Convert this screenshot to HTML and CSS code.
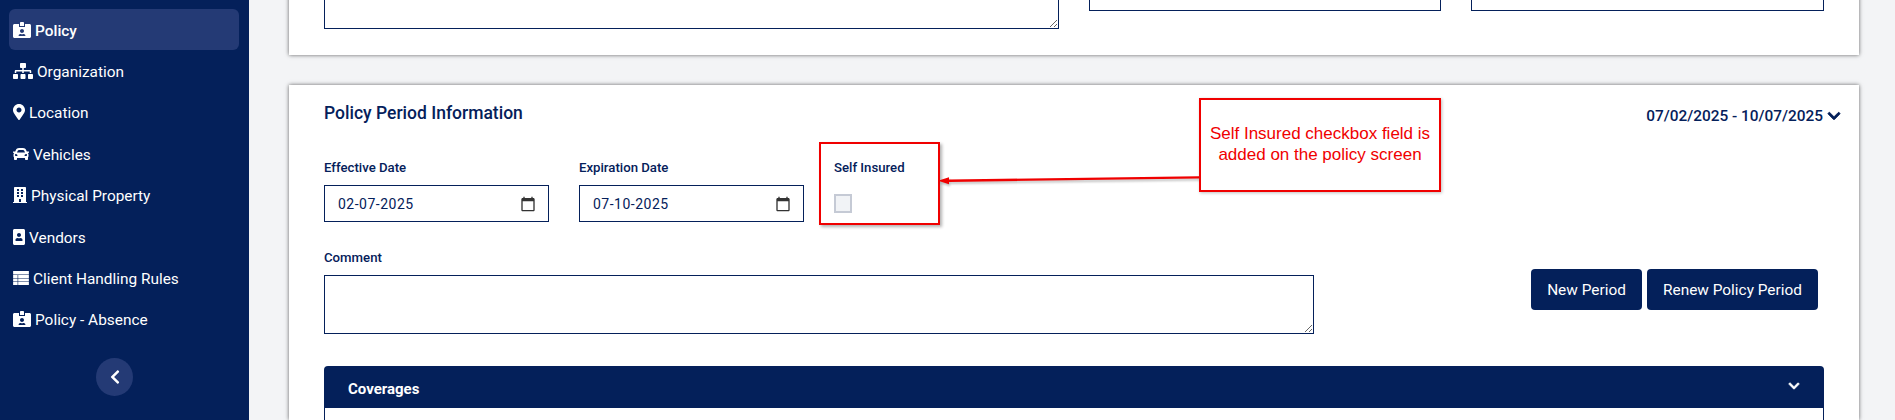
FILE: index.html
```html
<!DOCTYPE html>
<html lang="en">

<head>
  <meta charset="UTF-8">
  <meta name="viewport" content="width=device-width, initial-scale=1.0">
  <title>Policy</title>
  <link rel="stylesheet" href="styles.css">
</head>

<body>
  <svg class="icon-defs" xmlns="http://www.w3.org/2000/svg">
    <symbol id="i-idcard" viewBox="0 0 576 512"><path d="M528 64H384v96H192V64H48C21.5 64 0 85.5 0 112v352c0 26.5 21.5 48 48 48h480c26.5 0 48-21.5 48-48V112c0-26.5-21.5-48-48-48zM288 224c35.3 0 64 28.7 64 64s-28.7 64-64 64-64-28.7-64-64 28.7-64 64-64zm93.3 224H194.7c-10.4 0-18.8-10-15.6-19.8 8.3-25.6 32.4-44.2 60.9-44.2h8.2c12.3 5.1 25.7 8 39.8 8s27.6-2.9 39.8-8h8.2c28.4 0 52.5 18.5 60.9 44.2 3.2 9.8-5.2 19.8-15.6 19.8zM352 32c0-17.7-14.3-32-32-32h-64c-17.7 0-32 14.3-32 32v96h128V32z"/></symbol>
    <symbol id="i-sitemap" viewBox="0 0 640 512"><path d="M128 352H32c-17.67 0-32 14.33-32 32v96c0 17.67 14.33 32 32 32h96c17.67 0 32-14.33 32-32v-96c0-17.67-14.33-32-32-32zm-24-80h192v48h48v-48h192v48h48v-57.59c0-21.17-17.23-38.41-38.41-38.41H344v-64h40c17.67 0 32-14.33 32-32V32c0-17.67-14.33-32-32-32H256c-17.67 0-32 14.33-32 32v96c0 17.67 14.33 32 32 32h40v64H94.41C73.23 224 56 241.23 56 262.41V320h48v-48zm264 80h-96c-17.67 0-32 14.33-32 32v96c0 17.67 14.33 32 32 32h96c17.67 0 32-14.33 32-32v-96c0-17.67-14.33-32-32-32zm240 0h-96c-17.67 0-32 14.33-32 32v96c0 17.67 14.33 32 32 32h96c17.67 0 32-14.33 32-32v-96c0-17.67-14.33-32-32-32z"/></symbol>
    <symbol id="i-marker" viewBox="0 0 384 512"><path d="M172.268 501.67C26.97 291.031 0 268.413 0 192 0 85.961 85.961 0 192 0s192 85.961 192 192c0 76.413-26.97 99.031-172.268 309.67-9.535 13.774-29.93 13.773-39.464 0zM192 272c44.183 0 80-35.817 80-80s-35.817-80-80-80-80 35.817-80 80 35.817 80 80 80z"/></symbol>
    <symbol id="i-car" viewBox="0 0 512 512"><path d="M499.99 176h-59.87l-16.64-41.6C406.38 91.63 365.57 64 319.5 64h-127c-46.06 0-86.88 27.63-103.99 70.4L71.87 176H12.01C4.2 176-1.53 183.34.37 190.91l6 24C7.7 220.25 12.5 224 18.01 224h20.07C24.65 235.73 16 252.78 16 272v48c0 16.12 6.16 30.67 16 41.93V416c0 17.67 14.33 32 32 32h32c17.67 0 32-14.33 32-32v-32h256v32c0 17.67 14.33 32 32 32h32c17.67 0 32-14.33 32-32v-54.07c9.84-11.25 16-25.8 16-41.93v-48c0-19.22-8.65-36.27-22.07-48H494c5.51 0 10.31-3.75 11.64-9.09l6-24c1.89-7.57-3.84-14.91-11.65-14.91zm-352.06-17.83c7.29-18.22 24.94-30.17 44.57-30.17h127c19.63 0 37.28 11.95 44.57 30.17L384 208H128l19.93-49.83zM96 319.8c-19.2 0-32-12.76-32-31.9S76.8 256 96 256s48 28.71 48 47.85-28.8 15.95-48 15.95zm320 0c-19.2 0-48 3.19-48-15.95S396.8 256 416 256s32 12.76 32 31.9-12.8 31.9-32 31.9z"/></symbol>
    <symbol id="i-building" viewBox="0 0 448 512"><path d="M436 480h-20V24c0-13.255-10.745-24-24-24H56C42.745 0 32 10.745 32 24v456H12c-6.627 0-12 5.373-12 12v20h448v-20c0-6.627-5.373-12-12-12zM128 76c0-6.627 5.373-12 12-12h40c6.627 0 12 5.373 12 12v40c0 6.627-5.373 12-12 12h-40c-6.627 0-12-5.373-12-12V76zm0 96c0-6.627 5.373-12 12-12h40c6.627 0 12 5.373 12 12v40c0 6.627-5.373 12-12 12h-40c-6.627 0-12-5.373-12-12v-40zm52 148h-40c-6.627 0-12-5.373-12-12v-40c0-6.627 5.373-12 12-12h40c6.627 0 12 5.373 12 12v40c0 6.627-5.373 12-12 12zm76 160h-64v-84c0-6.627 5.373-12 12-12h40c6.627 0 12 5.373 12 12v84zm64-172c0 6.627-5.373 12-12 12h-40c-6.627 0-12-5.373-12-12v-40c0-6.627 5.373-12 12-12h40c6.627 0 12 5.373 12 12v40zm0-96c0 6.627-5.373 12-12 12h-40c-6.627 0-12-5.373-12-12v-40c0-6.627 5.373-12 12-12h40c6.627 0 12 5.373 12 12v40zm0-96c0 6.627-5.373 12-12 12h-40c-6.627 0-12-5.373-12-12V76c0-6.627 5.373-12 12-12h40c6.627 0 12 5.373 12 12v40z"/></symbol>
    <symbol id="i-portrait" viewBox="0 0 384 512"><path d="M336 0H48C21.5 0 0 21.5 0 48v416c0 26.5 21.5 48 48 48h288c26.5 0 48-21.5 48-48V48c0-26.5-21.5-48-48-48zM192 128c35.3 0 64 28.7 64 64s-28.7 64-64 64-64-28.7-64-64 28.7-64 64-64zm112 236.8c0 10.6-10 19.2-22.4 19.2H102.4C90 384 80 375.4 80 364.8v-19.2c0-31.8 30.1-57.6 67.2-57.6h5c12.3 5.1 25.7 8 39.8 8s27.6-2.9 39.8-8h5c37.1 0 67.2 25.8 67.2 57.6v19.2z"/></symbol>
    <symbol id="i-table" viewBox="0 0 512 512"><path d="M32 32H480V144H32zM32 160H160V256H32zM176 160H480V256H176zM32 272H160V368H32zM176 272H480V368H176zM32 384H160V480H32zM176 384H480V480H176z" transform="translate(-32 0) scale(1.125 1)"/></symbol>
    <symbol id="i-down" viewBox="-30 0 508 512"><path d="M207.029 381.476L12.686 187.132c-9.373-9.373-9.373-24.569 0-33.941l22.667-22.667c9.357-9.357 24.522-9.375 33.901-.04L224 284.505l154.745-154.021c9.379-9.335 24.544-9.317 33.901.04l22.667 22.667c9.373 9.373 9.373 24.569 0 33.941L240.971 381.476c-9.373 9.372-24.569 9.372-33.942 0z"/></symbol>
    <symbol id="i-left" viewBox="0 0 320 512"><path d="M34.52 239.03L228.87 44.69c9.37-9.37 24.57-9.37 33.94 0l22.67 22.67c9.36 9.36 9.37 24.52.04 33.9L131.49 256l154.02 154.75c9.34 9.38 9.32 24.54-.04 33.9l-22.67 22.67c-9.37 9.37-24.57 9.37-33.94 0L34.52 272.97c-9.37-9.37-9.37-24.57 0-33.94z"/></symbol>
    <symbol id="i-cal" viewBox="0 0 24 24"><path d="M20 3h-1V1h-2v2H7V1H5v2H4c-1.1 0-2 .9-2 2v16c0 1.1.9 2 2 2h16c1.1 0 2-.9 2-2V5c0-1.1-.9-2-2-2zm0 18H4V8h16v13z"/></symbol>
  </svg>

  <div class="page">
    <nav class="sidebar">
      <a class="nav-item active"><svg class="nav-icon w18"><use href="#i-idcard"/></svg><span class="nav-text">Policy</span></a>
      <a class="nav-item"><svg class="nav-icon w20"><use href="#i-sitemap"/></svg><span class="nav-text">Organization</span></a>
      <a class="nav-item"><svg class="nav-icon w12"><use href="#i-marker"/></svg><span class="nav-text">Location</span></a>
      <a class="nav-item"><svg class="nav-icon w16"><use href="#i-car"/></svg><span class="nav-text">Vehicles</span></a>
      <a class="nav-item"><svg class="nav-icon w14"><use href="#i-building"/></svg><span class="nav-text">Physical Property</span></a>
      <a class="nav-item"><svg class="nav-icon w12"><use href="#i-portrait"/></svg><span class="nav-text">Vendors</span></a>
      <a class="nav-item"><svg class="nav-icon w16"><use href="#i-table"/></svg><span class="nav-text">Client Handling Rules</span></a>
      <a class="nav-item"><svg class="nav-icon w18"><use href="#i-idcard"/></svg><span class="nav-text">Policy - Absence</span></a>
      <button class="collapse-btn"><svg class="collapse-icon"><use href="#i-left"/></svg></button>
    </nav>

    <main class="content">
      <section class="card card-top">
        <div class="top-row">
          <textarea class="text-box top-area"></textarea>
          <div class="top-input first"></div>
          <div class="top-input second"></div>
        </div>
      </section>

      <section class="card card-period">
        <div class="period-head">
          <h2 class="period-title">Policy Period Information</h2>
          <div class="period-range">07/02/2025 - 10/07/2025 <svg class="range-icon"><use href="#i-down"/></svg></div>
        </div>

        <div class="field-row">
          <div class="field">
            <label class="field-label">Effective Date</label>
            <div class="date-input"><span>02-07-2025</span><svg class="cal-icon"><use href="#i-cal"/></svg></div>
          </div>
          <div class="field">
            <label class="field-label">Expiration Date</label>
            <div class="date-input"><span>07-10-2025</span><svg class="cal-icon"><use href="#i-cal"/></svg></div>
          </div>
          <div class="field">
            <label class="field-label">Self Insured</label>
            <input class="check" type="checkbox">
          </div>
        </div>

        <div class="comment-row">
          <div class="comment-col">
            <label class="field-label">Comment</label>
            <textarea class="text-box comment-area"></textarea>
          </div>
          <div class="btn-group">
            <button class="btn btn-new">New Period</button>
            <button class="btn btn-renew">Renew Policy Period</button>
          </div>
        </div>

        <div class="panel">
          <div class="panel-head">
            <span class="panel-title">Coverages</span>
            <svg class="panel-icon"><use href="#i-down"/></svg>
          </div>
          <div class="panel-body"></div>
        </div>

        <!-- screenshot markup on top of the form -->
        <div class="mark-box"></div>
        <svg class="mark-arrow" viewBox="0 0 262 12">
          <path d="M0 6.7 L11 3.2 L11 5.6 L261 2.2 L261 4.4 L11 8 L11 10.2 Z" fill="#f00000"/>
        </svg>
        <div class="mark-note">Self Insured checkbox field is<br>added on the policy screen</div>
      </section>
    </main>
  </div>
</body>
</html>
```

FILE: styles.css
```css
html,
body {
  margin: 0;
  height: 420px;
  overflow: hidden;
}

body {
  background-color: #f3f4f6;
  font-family: 'Roboto', sans-serif;
  color: #04205a;
}

.icon-defs {
  display: none;
}

.page {
  display: flex;
  height: 420px;
}

/* sidebar */
.sidebar {
  flex: 0 0 249px;
  box-sizing: border-box;
  padding: 9px 10px 0 9px;
  background-color: #04205a;
}

.nav-item {
  display: flex;
  align-items: center;
  gap: 4px;
  box-sizing: border-box;
  height: 41.4px;
  padding-left: 4px;
  border-radius: 6px;
  color: #fff;
  font-size: 15.4px;
  white-space: nowrap;
}

.nav-text {
  padding-top: 2px;
}

.nav-item.active {
  background-color: #243a75;
  font-weight: 500;
}

.nav-icon {
  height: 16px;
  fill: #fff;
  flex: none;
}

.w12 { width: 12px; }
.w14 { width: 14px; }
.w16 { width: 16px; }
.w18 { width: 18px; }
.w20 { width: 20px; }

.collapse-btn {
  display: flex;
  align-items: center;
  justify-content: center;
  width: 37px;
  height: 38px;
  margin: 18px 0 0 87px;
  padding: 0;
  border: none;
  border-radius: 50%;
  background-color: #243a75;
}

.collapse-icon {
  width: 10px;
  height: 16px;
  fill: #fff;
}

/* content */
.content {
  flex: 1;
  min-width: 0;
  padding: 0 36px 0 40px;
}

.card {
  position: relative;
  box-sizing: border-box;
  background-color: #fff;
  box-shadow: 0 0 4px rgba(0, 0, 0, 0.6);
}

.card-top {
  margin-top: -60px;
  padding: 20px 35px 26px 35px;
}

.top-row {
  display: flex;
  align-items: flex-start;
}

.text-box {
  display: block;
  box-sizing: border-box;
  margin: 0;
  border: 1px solid #04205a;
  background-color: #fff;
  border-radius: 0;
  outline: none;
}

.top-area {
  width: 735px;
  height: 69px;
}

.top-input {
  box-sizing: border-box;
  height: 51px;
  border: 1px solid #04205a;
}

.top-input.first {
  width: 352px;
  margin-left: 30px;
}

.top-input.second {
  width: 353px;
  margin-left: 30px;
}

.card-period {
  height: 335px;
  margin-top: 30px;
  padding: 16px 35px 0 35px;
}

.period-head {
  display: flex;
  justify-content: space-between;
  align-items: center;
  height: 24px;
}

.period-title {
  margin: 0;
  font-size: 17.5px;
  font-weight: 500;
  line-height: 24px;
}

.period-range {
  display: flex;
  align-items: center;
  gap: 4px;
  margin: 6px -17px 0 0;
  font-size: 15.4px;
  font-weight: 500;
}

.range-icon {
  width: 14px;
  height: 16px;
  fill: #04205a;
  stroke: #04205a;
  stroke-width: 30;
}

.field-row {
  display: flex;
  gap: 30px;
  margin-top: 32px;
}

.field {
  width: 225px;
}

.field-label {
  display: block;
  margin-bottom: 7px;
  padding-top: 1px;
  font-size: 13.2px;
  font-weight: 500;
  line-height: 20px;
}

.date-input {
  display: flex;
  align-items: center;
  justify-content: space-between;
  box-sizing: border-box;
  height: 37px;
  padding: 0 11px 0 13px;
  border: 1px solid #04205a;
  font-size: 14px;
  letter-spacing: 0.5px;
}

.cal-icon {
  width: 16px;
  height: 16px;
  margin-right: 1px;
  fill: #333;
}

.check {
  display: block;
  appearance: none;
  box-sizing: border-box;
  width: 18px;
  height: 19px;
  margin: 16px 0 0;
  border: 2px solid #c5cad5;
  background-color: #f1f3f6;
}

.comment-row {
  display: flex;
  justify-content: space-between;
  margin-top: 25px;
  padding-right: 6px;
}

.comment-col {
  width: 990px;
}

.comment-area {
  width: 100%;
  height: 59px;
}

.btn-group {
  display: flex;
  gap: 5px;
  align-self: flex-end;
  margin-bottom: 24px;
}

.btn {
  height: 41px;
  padding: 0;
  border: none;
  border-radius: 4px;
  background-color: #04205a;
  color: #fff;
  font-family: inherit;
  font-size: 15.4px;
  font-weight: 400;
}

.btn-new {
  width: 111px;
}

.btn-renew {
  width: 171px;
}

.panel {
  margin-top: 32px;
}

.panel-head {
  display: flex;
  align-items: center;
  justify-content: space-between;
  height: 42px;
  padding: 0 24px;
  border-radius: 4px 4px 0 0;
  background-color: #04205a;
  color: #fff;
}

.panel-title {
  padding-top: 3px;
  font-size: 15px;
  font-weight: 700;
}

.panel-icon {
  width: 12px;
  height: 14px;
  margin-top: -2px;
  fill: #fff;
  stroke: #fff;
  stroke-width: 30;
}

.panel-body {
  height: 12px;
  border: 1px solid #04205a;
  border-top: none;
  border-bottom: none;
}

/* annotation layer */
.mark-box {
  position: absolute;
  left: 530px;
  top: 57px;
  box-sizing: border-box;
  width: 121px;
  height: 83px;
  border: 2px solid #f00000;
  box-shadow: 2px 2px 3px rgba(0, 0, 0, 0.3);
}

.mark-arrow {
  position: absolute;
  left: 649px;
  top: 89px;
  width: 262px;
  height: 12px;
  filter: drop-shadow(1px 2px 1px rgba(0, 0, 0, 0.25));
}

.mark-note {
  position: absolute;
  left: 910px;
  top: 13px;
  display: flex;
  align-items: center;
  justify-content: center;
  box-sizing: border-box;
  width: 242px;
  height: 94px;
  padding-bottom: 2px;
  border: 2px solid #f00000;
  background-color: #fff;
  color: #f00000;
  font-family: 'Liberation Sans', sans-serif;
  font-size: 17px;
  line-height: 21px;
  text-align: center;
  box-shadow: 1px 1px 3px rgba(0, 0, 0, 0.25);
}
```
